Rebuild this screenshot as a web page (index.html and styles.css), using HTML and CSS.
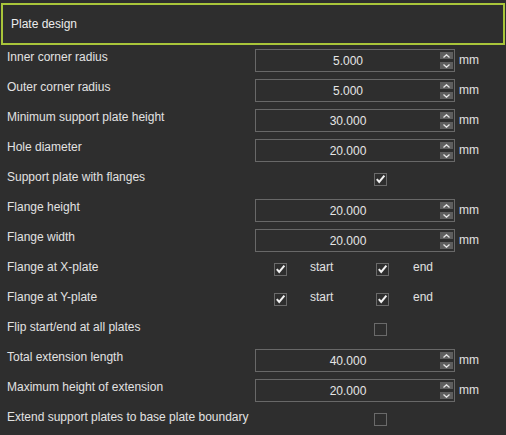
FILE: index.html
```html
<!DOCTYPE html>
<html lang="en">
<head>
    <meta charset="UTF-8">
    <meta name="viewport" content="width=device-width, initial-scale=1.0">
    <title>Plate design</title>
    <link rel="stylesheet" href="styles.css">
</head>
<body>
  <div class="header">Plate design</div>

  <div class="row">
    <span class="label">Inner corner radius</span>
    <div class="spin"><input type="text" value="5.000"><div class="arrows"><span class="up"></span><span class="down"></span></div></div>
    <span class="unit">mm</span>
  </div>
  <div class="row">
    <span class="label">Outer corner radius</span>
    <div class="spin"><input type="text" value="5.000"><div class="arrows"><span class="up"></span><span class="down"></span></div></div>
    <span class="unit">mm</span>
  </div>
  <div class="row">
    <span class="label">Minimum support plate height</span>
    <div class="spin"><input type="text" value="30.000"><div class="arrows"><span class="up"></span><span class="down"></span></div></div>
    <span class="unit">mm</span>
  </div>
  <div class="row">
    <span class="label">Hole diameter</span>
    <div class="spin"><input type="text" value="20.000"><div class="arrows"><span class="up"></span><span class="down"></span></div></div>
    <span class="unit">mm</span>
  </div>
  <div class="row">
    <span class="label">Support plate with flanges</span>
    <div class="single"><span class="check on"></span></div>
  </div>
  <div class="row">
    <span class="label">Flange height</span>
    <div class="spin"><input type="text" value="20.000"><div class="arrows"><span class="up"></span><span class="down"></span></div></div>
    <span class="unit">mm</span>
  </div>
  <div class="row">
    <span class="label">Flange width</span>
    <div class="spin"><input type="text" value="20.000"><div class="arrows"><span class="up"></span><span class="down"></span></div></div>
    <span class="unit">mm</span>
  </div>
  <div class="row">
    <span class="label">Flange at X-plate</span>
    <div class="pair">
      <span class="check on"></span><span class="opt">start</span>
      <span class="check on"></span><span class="opt end">end</span>
    </div>
  </div>
  <div class="row">
    <span class="label">Flange at Y-plate</span>
    <div class="pair">
      <span class="check on"></span><span class="opt">start</span>
      <span class="check on"></span><span class="opt end">end</span>
    </div>
  </div>
  <div class="row">
    <span class="label">Flip start/end at all plates</span>
    <div class="single"><span class="check"></span></div>
  </div>
  <div class="row">
    <span class="label">Total extension length</span>
    <div class="spin"><input type="text" value="40.000"><div class="arrows"><span class="up"></span><span class="down"></span></div></div>
    <span class="unit">mm</span>
  </div>
  <div class="row">
    <span class="label">Maximum height of extension</span>
    <div class="spin"><input type="text" value="20.000"><div class="arrows"><span class="up"></span><span class="down"></span></div></div>
    <span class="unit">mm</span>
  </div>
  <div class="row">
    <span class="label">Extend support plates to base plate boundary</span>
    <div class="single"><span class="check"></span></div>
  </div>
</body>
</html>
```

FILE: styles.css
```css
body {
  margin: 0;
  background-color: #2e2e2e;
  color: #e2e2e2;
  font-family: "Liberation Sans", Arial, sans-serif;
  font-size: 12px;
}
.header {
  height: 42px;
  box-sizing: border-box;
  margin: 3px 1px 0 1px;
  padding-left: 8px;
  border: 2px solid #a9c53a;
  display: flex;
  align-items: center;
  color: #ececec;
}
.row {
  display: grid;
  grid-template-columns: 255px 200px 1fr;
  height: 30px;
  align-items: start;
}
.label {
  padding-left: 7px;
  line-height: 24px;
  white-space: nowrap;
}
.unit {
  padding-left: 4px;
  line-height: 30px;
}
.spin {
  margin-top: 4px;
  height: 23px;
  box-sizing: border-box;
  border: 1px solid #686868;
  display: flex;
}
.spin input {
  flex: 1;
  min-width: 0;
  margin: 0;
  padding: 0;
  border: none;
  background: transparent;
  color: #e6e6e6;
  font-family: inherit;
  font-size: 12px;
  text-align: center;
  outline: none;
}
.arrows {
  display: flex;
  flex-direction: column;
  gap: 3px;
  padding: 2px 1px 0 0;
}
.arrows span {
  width: 13px;
  height: 7px;
  background-color: #5e5e5e;
  background-repeat: no-repeat;
  background-position: center;
}
.arrows .up {
  background-image: url("data:image/svg+xml,%3Csvg xmlns='http://www.w3.org/2000/svg' width='7' height='4'%3E%3Cpath d='M0.5 3.5L3.5 0.8L6.5 3.5' fill='none' stroke='%23e6e6e6' stroke-width='1.3'/%3E%3C/svg%3E");
}
.arrows .down {
  background-image: url("data:image/svg+xml,%3Csvg xmlns='http://www.w3.org/2000/svg' width='7' height='4'%3E%3Cpath d='M0.5 0.5L3.5 3.2L6.5 0.5' fill='none' stroke='%23e6e6e6' stroke-width='1.3'/%3E%3C/svg%3E");
}
.single {
  grid-column: 2 / 4;
  display: flex;
  justify-content: center;
}
.check {
  display: block;
  width: 13px;
  height: 13px;
  margin-top: 8px;
  box-sizing: border-box;
  border: 1px solid #6a6a6a;
}
.check.on {
  background-image: url("data:image/svg+xml,%3Csvg xmlns='http://www.w3.org/2000/svg' width='11' height='11'%3E%3Cpath d='M1.8 5.2L4.2 8L9.4 1.6' fill='none' stroke='%23f2f2f2' stroke-width='2'/%3E%3C/svg%3E");
  background-repeat: no-repeat;
  background-position: center;
}
.pair {
  grid-column: 2 / 4;
  display: grid;
  grid-template-columns: 32px 70px 32px 1fr;
  align-items: start;
}
.pair .check {
  justify-self: end;
}
.opt {
  line-height: 24px;
  padding-left: 23px;
}
.opt.end {
  padding-left: 24px;
}
```
